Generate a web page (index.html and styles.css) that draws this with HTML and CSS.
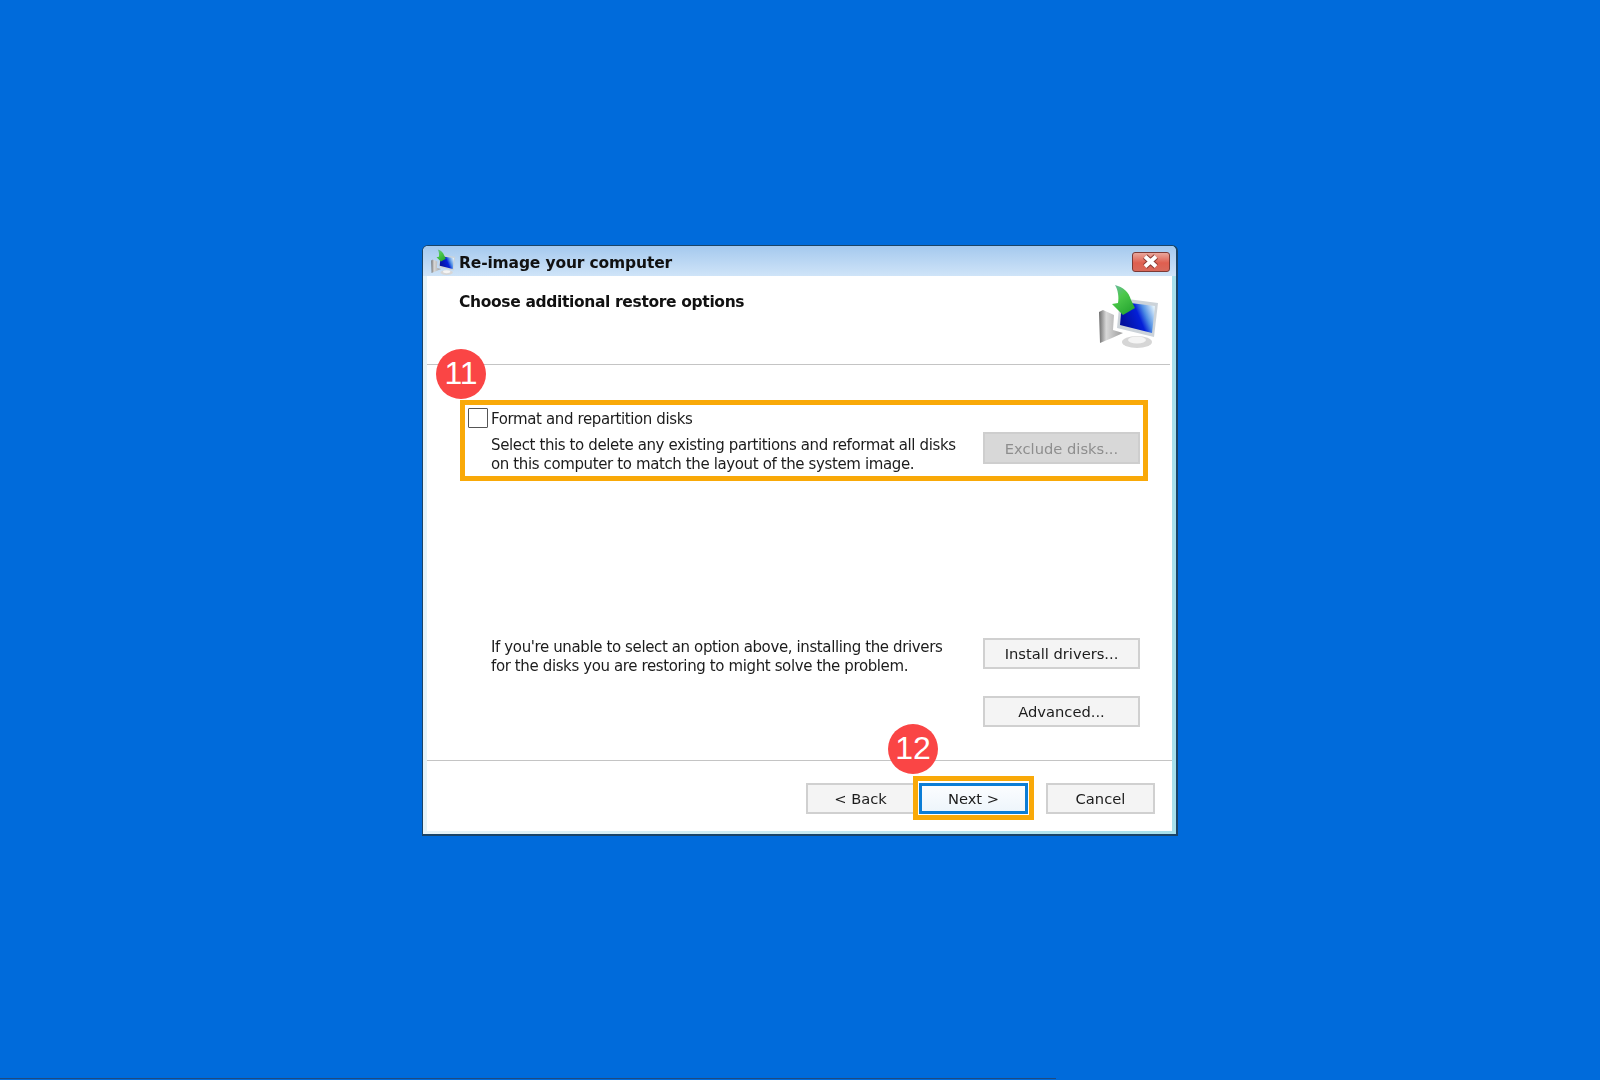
FILE: index.html
```html
<!DOCTYPE html>
<html lang="en">
<head>
  <meta charset="UTF-8" />
  <title>Re-image your computer</title>
  <link rel="stylesheet" href="styles.css">
</head>
<body>
  <svg class="defs" width="0" height="0">
    <defs>
      <linearGradient id="screenFill" x1="0.05" y1="0.6" x2="1" y2="0.25">
        <stop offset="0" stop-color="#04109c" />
        <stop offset="0.5" stop-color="#0420d8" />
        <stop offset="0.7" stop-color="#4f8ee4" />
        <stop offset="1" stop-color="#e2f2fb" />
      </linearGradient>
      <linearGradient id="arrowFill" x1="0" y1="0" x2="0.6" y2="1">
        <stop offset="0" stop-color="#6fb8a8" />
        <stop offset="0.45" stop-color="#4cc84a" />
        <stop offset="1" stop-color="#28a832" />
      </linearGradient>
      <linearGradient id="towerFill" x1="0" y1="0" x2="1" y2="0">
        <stop offset="0" stop-color="#6c6c6c" />
        <stop offset="0.3" stop-color="#d8d8d8" />
        <stop offset="1" stop-color="#9c9c9c" />
      </linearGradient>
      <symbol id="restoreIcon" viewBox="0 0 60 64">
        <path d="M1 28L5 26 16 31 15 46 25 49 14 54 2 59z" fill="url(#towerFill)" />
        <ellipse cx="39" cy="58" rx="15" ry="6" fill="#d6d6d6" />
        <ellipse cx="39" cy="56" rx="9" ry="3.500" fill="#f4f4f4" />
        <path d="M22 14L60 19 56 53 19 44z" fill="#ccd3d9" />
        <path d="M24 18L57 22 54 49 22 41z" fill="url(#screenFill)" />
        <path d="M17 1C25 3 31 8 33 16L37 24 25 31 14 20 20 19C21 13 20 6 17 1z" fill="url(#arrowFill)" />
      </symbol>
    </defs>
  </svg>

  <div class="window">
    <div class="titlebar">
      <svg class="title-icon"><use href="#restoreIcon" /></svg>
      <span class="title-text">Re-image your computer</span>
      <div class="close-btn">
        <svg viewBox="0 0 38 20" width="38" height="20">
          <path d="M13 4.500L24 14.500M24 4.500L13 14.500" stroke="#8a3a34" stroke-width="6" />
          <path d="M13 4.500L24 14.500M24 4.500L13 14.500" stroke="#fff" stroke-width="4" />
        </svg>
      </div>
    </div>

    <div class="dialog">
      <div class="header">
        <h2>Choose additional restore options</h2>
        <svg class="header-icon"><use href="#restoreIcon" /></svg>
      </div>

      <div class="main">
        <div class="check-row">
          <span class="checkbox"></span>
          <span class="check-label">Format and repartition disks</span>
        </div>
        <div class="option-row">
          <p class="desc">Select this to delete any existing partitions and reformat all disks<br>on this computer to match the layout of the system image.</p>
          <div class="btn btn-side btn-disabled">Exclude disks...</div>
        </div>
        <div class="option-row drivers-row">
          <p class="desc desc-top">If you're unable to select an option above, installing the drivers<br>for the disks you are restoring to might solve the problem.</p>
          <div class="btn btn-side">Install drivers...</div>
        </div>
        <div class="advanced-row">
          <div class="btn btn-side">Advanced...</div>
        </div>
      </div>

      <div class="footer">
        <div class="btn btn-back">&lt; Back</div>
        <div class="btn btn-next">Next &gt;</div>
        <div class="btn btn-cancel">Cancel</div>
      </div>
    </div>

    <div class="callout callout-format"></div>
    <div class="callout callout-next"></div>
    <div class="badge badge-11">11</div>
    <div class="badge badge-12">12</div>
  </div>

  <div class="video-bar"></div>
</body>
</html>
```

FILE: styles.css
```css
html, body {
  height: 100%;
}

body {
  margin: 0;
  background: #006bdb;
  display: flex;
  flex-direction: column;
  overflow: hidden;
  font-family: "DejaVu Sans", sans-serif;
  font-size: 15px;
  letter-spacing: -0.38px;
  color: #1c1c1c;
}

.defs {
  position: absolute;
}

.window {
  position: relative;
  box-sizing: border-box;
  width: 756px;
  height: 591px;
  margin: 245px 0 0 422px;
  display: flex;
  flex-direction: column;
  border: 1px solid #1a4468;
  border-width: 1px 2px 2px 1px;
  border-radius: 6px 6px 0 0;
  background: linear-gradient(to right, #e6f3f8, #a6e0ec);
}

.titlebar {
  box-sizing: border-box;
  height: 30px;
  display: flex;
  align-items: center;
  padding: 2px 6px 0 7px;
  border-radius: 5px 5px 0 0;
  background: linear-gradient(#a5c9ee, #cfe4f8);
  filter: blur(0.35px);
}

.title-icon {
  width: 26px;
  height: 26px;
}

.title-text {
  margin-left: 3px;
  padding-top: 2px;
  font-weight: bold;
  font-size: 15.5px;
  letter-spacing: -0.15px;
  color: #111;
}

.close-btn {
  margin-left: auto;
  width: 38px;
  height: 20px;
  box-sizing: border-box;
  border: 1px solid #7c3a36;
  border-radius: 3px;
  background: linear-gradient(#e9a79c, #df5f50 55%, #d9695b);
  display: flex;
  align-items: center;
  justify-content: center;
}

.close-btn svg {
  flex: none;
}

.dialog {
  flex: 1;
  margin: 0 4px 3px 4px;
  background: #fff;
  display: flex;
  flex-direction: column;
  filter: blur(0.35px);
}

.header {
  height: 88px;
  display: flex;
  justify-content: space-between;
  padding-left: 32px;
  margin-right: 2px;
  border-bottom: 1px solid #c4c4c4;
}

.header h2 {
  margin: 16px 0 0;
  font-size: 15.5px;
  letter-spacing: -0.35px;
  line-height: 20px;
  color: #111;
}

.header-icon {
  width: 60px;
  height: 64px;
  margin: 8px 12px 0 0;
}

.main {
  flex: 1;
  box-sizing: border-box;
  padding: 43px 32px 0 41px;
}

.check-row {
  display: flex;
  align-items: center;
  gap: 3px;
  height: 20px;
}

.checkbox {
  box-sizing: border-box;
  width: 20px;
  height: 20px;
  border: 1px solid #555;
  border-radius: 1px;
}

.check-label {
  padding-top: 2px;
}

.option-row {
  display: flex;
  justify-content: space-between;
  margin-top: 4px;
}

.drivers-row {
  margin-top: 164px;
}

.advanced-row {
  display: flex;
  justify-content: flex-end;
  margin-top: 20px;
}

.desc {
  margin: 4px 0 0 23px;
  line-height: 19px;
}

.desc-top {
  margin-top: 0;
}

.btn {
  box-sizing: border-box;
  height: 31px;
  display: flex;
  align-items: center;
  justify-content: center;
  border: 2px solid #d0d0d0;
  background: #f4f4f4;
  font-size: 14.7px;
  letter-spacing: 0;
}

.btn-side {
  width: 157px;
}

.btn-disabled {
  height: 32px;
  padding-top: 1px;
  background: #d8d8d8;
  border-color: #cecece;
  color: #8e8e8e;
}

.footer {
  height: 71px;
  box-sizing: border-box;
  display: flex;
  padding: 22px 17px 0 0;
  justify-content: flex-end;
  border-top: 1px solid #c4c4c4;
}

.btn-back {
  width: 109px;
}

.btn-next {
  width: 109px;
  margin-left: 4px;
  border: 3px solid #0b7dd6;
  background: linear-gradient(#fbfdff, #eef5fb);
}

.btn-cancel {
  width: 109px;
  margin-left: 18px;
}

.callout {
  position: absolute;
  box-sizing: border-box;
  border: 5px solid #f9a908;
}

.callout-format {
  left: 37px;
  top: 154px;
  width: 688px;
  height: 81px;
}

.callout-next {
  left: 490px;
  top: 530px;
  width: 121px;
  height: 44px;
}

.badge {
  position: absolute;
  width: 50px;
  height: 50px;
  border-radius: 50%;
  background: #fa4545;
  color: #fff;
  font-family: "Liberation Sans", sans-serif;
  font-size: 32px;
  letter-spacing: 0;
  line-height: 48px;
  text-align: center;
}

.badge-11 {
  left: 13px;
  top: 103px;
}

.badge-12 {
  left: 465px;
  top: 478px;
}

.video-bar {
  margin-top: auto;
  margin-bottom: 1px;
  width: 1056px;
  height: 1px;
  background: #1f4a80;
}
```
